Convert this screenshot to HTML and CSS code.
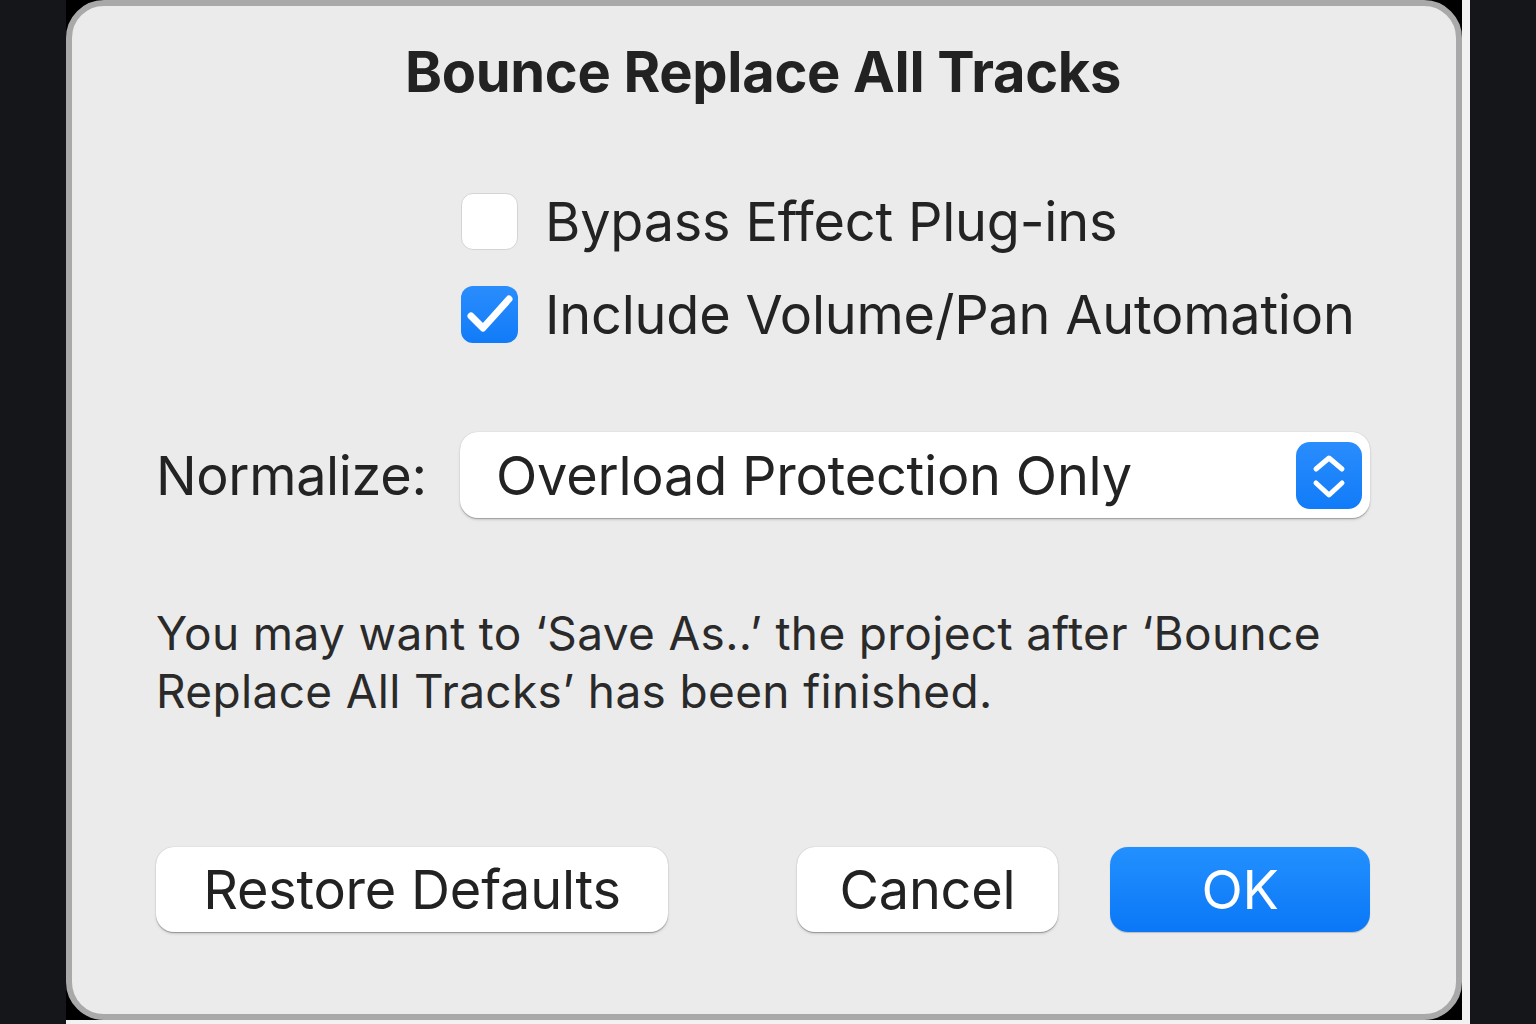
FILE: index.html
```html
<!DOCTYPE html>
<html lang="en">
<head>
<meta charset="utf-8">
<title>Bounce Replace All Tracks</title>
<link rel="stylesheet" href="styles.css">
</head>
<body>
<div class="shot">
  <div class="backdrop">
    <div class="dialog">
      <h1 class="title">Bounce Replace All Tracks</h1>
      <div class="options">
        <label class="check-row">
          <span class="checkbox"></span>
          <span class="check-label">Bypass Effect Plug-ins</span>
        </label>
        <label class="check-row">
          <span class="checkbox checked">
            <svg viewBox="0 0 57 57" width="57" height="57"><path d="M10 30 L22 42 L48 13" fill="none" stroke="#fff" stroke-width="7" stroke-linecap="round" stroke-linejoin="round"/></svg>
          </span>
          <span class="check-label">Include Volume/Pan Automation</span>
        </label>
      </div>
      <div class="normalize">
        <span class="field-label">Normalize:</span>
        <div class="popup">
          <span class="popup-text">Overload Protection Only</span>
          <span class="stepper">
            <svg viewBox="0 0 66 67" width="66" height="67"><path d="M20 27 L33 16 L46 27 M20 41 L33 53 L46 41" fill="none" stroke="#fff" stroke-width="5" stroke-linecap="round" stroke-linejoin="round"/></svg>
          </span>
        </div>
      </div>
      <p class="note">You may want to ‘Save As..’ the project after ‘Bounce<br>Replace All Tracks’ has been finished.</p>
      <div class="buttons">
        <button class="btn wide">Restore Defaults</button>
        <div class="right-buttons">
          <button class="btn">Cancel</button>
          <button class="btn primary">OK</button>
        </div>
      </div>
    </div>
  </div>
</div>
</body>
</html>
```

FILE: styles.css
```css
html, body {
  margin: 0;
  padding: 0;
  width: 1536px;
  height: 1024px;
  overflow: hidden;
  background: #15161a;
  font-family: Inter, "Noto Sans", "Liberation Sans", sans-serif;
}

.shot {
  margin-left: 66px;
  width: 1404px;
  height: 1024px;
  background: #f2f2f2;
  padding: 0 8px 4px 0;
  box-sizing: border-box;
}

.backdrop {
  width: 1396px;
  height: 1020px;
  background: #000;
}

.dialog {
  box-sizing: border-box;
  width: 1396px;
  height: 1020px;
  background: #ebebeb;
  border: 6px solid #a9a9a9;
  border-radius: 38px;
  padding: 0 86px 0 84px;
  display: flex;
  flex-direction: column;
  color: #232323;
}

.title {
  margin: 32px 0 0;
  text-align: center;
  font-size: 56px;
  font-weight: 700;
  line-height: 68px;
  color: #222;
  letter-spacing: -0.3px;
}

.options {
  margin-top: 87px;
  padding-left: 305px;
  display: flex;
  flex-direction: column;
  gap: 36px;
}

.check-row {
  display: flex;
  align-items: center;
  gap: 27px;
  height: 57px;
}

.checkbox {
  box-sizing: border-box;
  width: 57px;
  height: 57px;
  border-radius: 12px;
  background: #fff;
  border: 1.5px solid #d4d4d4;
  flex: none;
  display: flex;
}

.checkbox.checked {
  border: none;
  background: linear-gradient(#2a8dfd, #117bf8);
}

.check-label {
  font-size: 54px;
  line-height: 1;
  letter-spacing: -0.2px;
}

.normalize {
  margin-top: 89px;
  display: flex;
  align-items: center;
}

.field-label {
  width: 304px;
  flex: none;
  font-size: 54px;
  letter-spacing: -0.35px;
}

.popup {
  box-sizing: border-box;
  width: 910px;
  height: 86px;
  background: #fff;
  border-radius: 18px;
  box-shadow: 0 0.5px 1px rgba(0,0,0,0.25), 0 2px 3px rgba(0,0,0,0.12);
  display: flex;
  align-items: center;
  justify-content: space-between;
  padding: 0 8px 0 36px;
}

.popup-text {
  font-size: 54px;
  letter-spacing: -0.2px;
}

.stepper {
  width: 66px;
  height: 67px;
  border-radius: 14px;
  background: linear-gradient(#2a8dfd, #117bf8);
  display: flex;
}

.note {
  margin: 86px 0 0 0;
  font-size: 46px;
  line-height: 58px;
  color: #2a2a2a;
  letter-spacing: 0.35px;
}

.buttons {
  margin-top: 127px;
  display: flex;
  justify-content: space-between;
  align-items: center;
}

.right-buttons {
  display: flex;
  gap: 52px;
}

.btn {
  box-sizing: border-box;
  height: 85px;
  width: 261px;
  border: none;
  border-radius: 18px;
  background: #fff;
  box-shadow: 0 0.5px 1px rgba(0,0,0,0.3), 0 2px 3px rgba(0,0,0,0.12);
  font-family: inherit;
  font-size: 54px;
  color: #222;
  letter-spacing: -0.2px;
  padding: 0;
}

.btn.wide {
  width: 512px;
}

.btn.primary {
  width: 260px;
  color: #fff;
  background: linear-gradient(#2390ff, #0a77f7);
  box-shadow: 0 0.5px 1px rgba(0,0,0,0.2);
}
```
